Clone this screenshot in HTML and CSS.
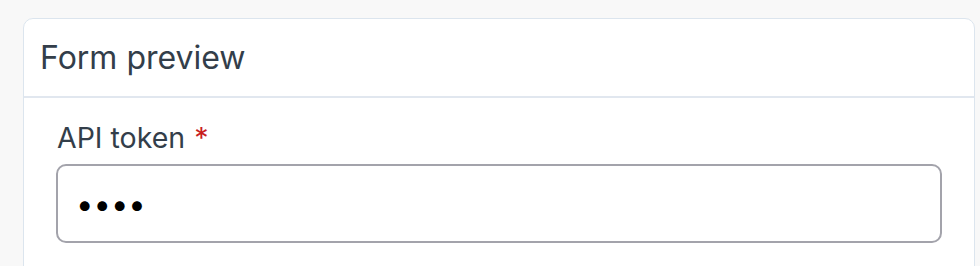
FILE: index.html
```html
<!DOCTYPE html>
<html lang="en">
<head>
    <meta charset="UTF-8">
    <meta name="viewport" content="width=device-width, initial-scale=1.0">
    <title>Form preview</title>
    <link rel="stylesheet" href="styles.css">
</head>
<body>
<div class="card">
    <div class="card-header">Form preview</div>
    <div class="card-body">
        <div class="form-group">
            <label for="apiToken">API token <span class="required">*</span></label>
            <input type="password" id="apiToken" value="1234" required>
        </div>
    </div>
</div>
</body>
</html>
```

FILE: styles.css
```css
body {
    font-family: Inter, "Noto Sans", sans-serif;
    margin: 0;
    padding: 18px 5px 0 23px;
    background-color: #f8f8f8;
    color: #333e4a;
    height: 266px;
    box-sizing: border-box;
    overflow: hidden;
}
.card {
    background: white;
    border: 1px solid #dce5ee;
    border-radius: 10px;
    height: 400px;
}
.card-header {
    font-size: 32px;
    line-height: 45px;
    padding: 16px 16px;
    border-bottom: 2px solid #e1e7ef;
}
.card-body {
    padding: 20px 32px 20px 33px;
}
.form-group label {
    display: block;
    font-size: 28.5px;
    line-height: 40px;
    margin-bottom: 6px;
}
.required {
    color: #c81e1e;
    margin-left: 1px;
}
input[type="password"] {
    display: block;
    box-sizing: border-box;
    width: calc(100% + 1px);
    margin-left: -1px;
    height: 79px;
    padding: 0 18px;
    font-family: Inter, "Noto Sans", sans-serif;
    font-size: 31px;
    color: #000;
    border: 2px solid #a3a3ab;
    border-radius: 10px;
    outline: none;
}
```
